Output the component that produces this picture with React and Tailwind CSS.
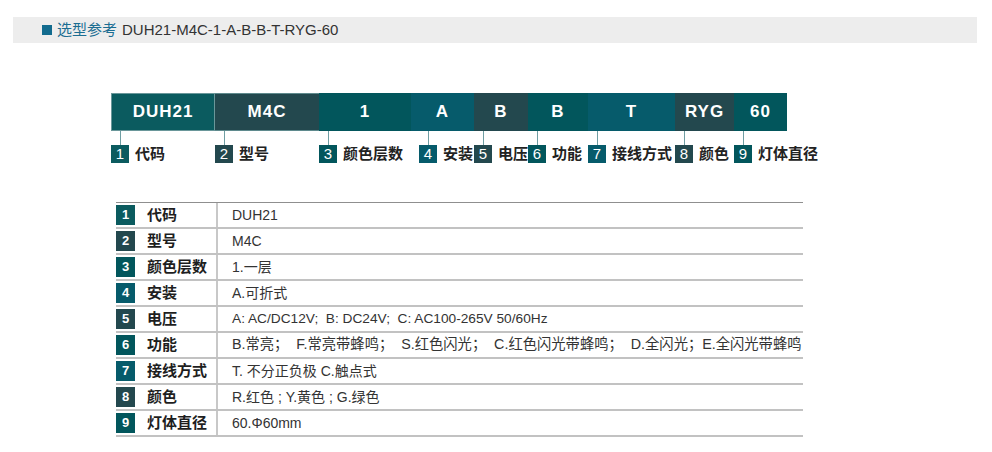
import React from "react";

const C1 = "bg-[#0b5b5f]";
const C2 = "bg-[#23484e]";
const C3 = "bg-[#02565c]";
const C4 = "bg-[#065b6b]";

const segs = [
  { code: "DUH21", w: "w-[104px]", bg: C1, n: "1", label: "代码", border: "border border-[#6a979a]", off: "" },
  { code: "M4C", w: "w-[104px]", bg: C2, n: "2", label: "型号", border: "border-y border-[#5f8a8d]", off: "" },
  { code: "1", w: "w-[92px]", bg: C3, n: "3", label: "颜色层数", border: "", off: "" },
  { code: "A", w: "w-[63px]", bg: C4, n: "4", label: "安装", border: "", off: "ml-[8px]" },
  { code: "B", w: "w-[54px]", bg: C2, n: "5", label: "电压", border: "", off: "" },
  { code: "B", w: "w-[60px]", bg: C3, n: "6", label: "功能", border: "", off: "" },
  { code: "T", w: "w-[87px]", bg: C4, n: "7", label: "接线方式", border: "", off: "" },
  { code: "RYG", w: "w-[59px]", bg: C2, n: "8", label: "颜色", border: "", off: "" },
  { code: "60", w: "w-[53px]", bg: C3, n: "9", label: "灯体直径", border: "", off: "" },
];

const rows = [
  { n: "1", bg: C1, label: "代码", value: "DUH21", size: "text-[14px]" },
  { n: "2", bg: C2, label: "型号", value: "M4C", size: "text-[14px]" },
  { n: "3", bg: C3, label: "颜色层数", value: "1.一层", size: "text-[14px]" },
  { n: "4", bg: C4, label: "安装", value: "A.可折式", size: "text-[14px]" },
  { n: "5", bg: C2, label: "电压", value: "A: AC/DC12V;  B: DC24V;  C: AC100-265V 50/60Hz", size: "text-[13.7px]" },
  { n: "6", bg: C3, label: "功能", value: "B.常亮；  F.常亮带蜂鸣；  S.红色闪光；  C.红色闪光带蜂鸣；  D.全闪光；E.全闪光带蜂鸣", size: "text-[14.3px]" },
  { n: "7", bg: C4, label: "接线方式", value: "T. 不分正负极 C.触点式", size: "text-[14px]" },
  { n: "8", bg: C2, label: "颜色", value: "R.红色 ; Y.黄色 ; G.绿色", size: "text-[14px]" },
  { n: "9", bg: C3, label: "灯体直径", value: "60.Φ60mm", size: "text-[14px]" },
];

const font = "font-['Liberation_Sans','Noto_Sans_CJK_SC',sans-serif]";

export default function App() {
  return (
    <div className={`w-[992px] h-[452px] bg-white ${font} overflow-hidden`}>
      {/* header */}
      <div className="mt-[17px] ml-[13px] w-[964px] h-[26px] bg-[#ededed] flex items-center pl-[29px]">
        <div className="w-[10px] h-[10px] bg-[#126b8e] mr-[5px] shrink-0"></div>
        <span className="text-[15px] text-[#1b6d92] mr-[5px]">选型参考</span>
        <span className="text-[15px] text-[#333]">DUH21-M4C-1-A-B-B-T-RYG-60</span>
      </div>

      {/* code bar */}
      <div className="mt-[50px] ml-[111px] flex">
        {segs.map((s, i) => (
          <div key={i} className={`${s.w} shrink-0 flex flex-col`}>
            <div
              className={`h-[38px] ${s.bg} ${s.border} flex items-center justify-center text-white font-bold text-[17px] tracking-[1px]`}
            >
              {s.code}
            </div>
            <div className={`flex flex-col ${s.off}`}>
              <div className="ml-[9px] w-px h-[14px] bg-[#6f9ea3]"></div>
              <div className="flex items-center whitespace-nowrap">
                <div
                  className={`w-[18px] h-[18px] shrink-0 ${s.bg} text-white text-[15px] flex items-center justify-center`}
                >
                  {s.n}
                </div>
                <span className="ml-[6px] text-[15px] font-bold text-[#222] leading-[18px]">
                  {s.label}
                </span>
              </div>
            </div>
          </div>
        ))}
      </div>

      {/* table */}
      <div className="mt-[39px] ml-[116px] w-[687px] border-t border-[#8f8f8f]">
        {rows.map((r) => (
          <div key={r.n} className="h-[26px] flex border-b-2 border-[#c2c2c2]">
            <div className="w-[102px] shrink-0 flex items-center border-r-2 border-[#c8c8c8]">
              <div
                className={`w-[19px] h-[20px] shrink-0 ${r.bg} text-white text-[13px] font-bold flex items-center justify-center`}
              >
                {r.n}
              </div>
              <span className="ml-[12px] text-[15px] font-bold text-[#1e1e1e]">{r.label}</span>
            </div>
            <div className={`flex-1 flex items-center pl-[14px] ${r.size} text-[#333] whitespace-pre`}>
              {r.value}
            </div>
          </div>
        ))}
      </div>
    </div>
  );
}
